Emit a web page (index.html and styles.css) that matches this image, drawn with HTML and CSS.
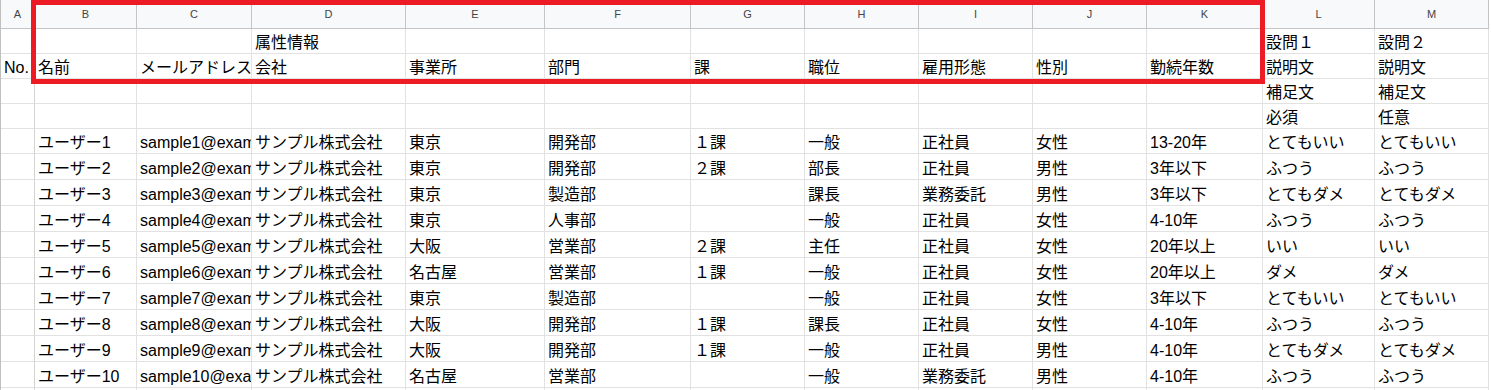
FILE: index.html
```html
<!DOCTYPE html>
<html lang="ja">
<head>
<meta charset="utf-8">
<title>Sheet</title>
<link rel="stylesheet" href="styles.css">
</head>
<body>
<div class="wrap">
  <div class="sheet">
    <div class="h">A</div><div class="h">B</div><div class="h">C</div><div class="h">D</div><div class="h">E</div><div class="h">F</div><div class="h">G</div><div class="h">H</div><div class="h">I</div><div class="h">J</div><div class="h">K</div><div class="h">L</div><div class="h">M</div>

    <div class="c"></div><div class="c"></div><div class="c"></div><div class="c">属性情報</div><div class="c"></div><div class="c"></div><div class="c"></div><div class="c"></div><div class="c"></div><div class="c"></div><div class="c"></div><div class="c">設問１</div><div class="c">設問２</div>

    <div class="c">No.</div><div class="c">名前</div><div class="c">メールアドレス</div><div class="c">会社</div><div class="c">事業所</div><div class="c">部門</div><div class="c">課</div><div class="c">職位</div><div class="c">雇用形態</div><div class="c">性別</div><div class="c">勤続年数</div><div class="c">説明文</div><div class="c">説明文</div>

    <div class="c"></div><div class="c"></div><div class="c"></div><div class="c"></div><div class="c"></div><div class="c"></div><div class="c"></div><div class="c"></div><div class="c"></div><div class="c"></div><div class="c"></div><div class="c">補足文</div><div class="c">補足文</div>

    <div class="c"></div><div class="c"></div><div class="c"></div><div class="c"></div><div class="c"></div><div class="c"></div><div class="c"></div><div class="c"></div><div class="c"></div><div class="c"></div><div class="c"></div><div class="c">必須</div><div class="c">任意</div>

    <div class="c"></div><div class="c">ユーザー1</div><div class="c">sample1@example.com</div><div class="c">サンプル株式会社</div><div class="c">東京</div><div class="c">開発部</div><div class="c">１課</div><div class="c">一般</div><div class="c">正社員</div><div class="c">女性</div><div class="c">13-20年</div><div class="c">とてもいい</div><div class="c">とてもいい</div>

    <div class="c"></div><div class="c">ユーザー2</div><div class="c">sample2@example.com</div><div class="c">サンプル株式会社</div><div class="c">東京</div><div class="c">開発部</div><div class="c">２課</div><div class="c">部長</div><div class="c">正社員</div><div class="c">男性</div><div class="c">3年以下</div><div class="c">ふつう</div><div class="c">ふつう</div>

    <div class="c"></div><div class="c">ユーザー3</div><div class="c">sample3@example.com</div><div class="c">サンプル株式会社</div><div class="c">東京</div><div class="c">製造部</div><div class="c"></div><div class="c">課長</div><div class="c">業務委託</div><div class="c">男性</div><div class="c">3年以下</div><div class="c">とてもダメ</div><div class="c">とてもダメ</div>

    <div class="c"></div><div class="c">ユーザー4</div><div class="c">sample4@example.com</div><div class="c">サンプル株式会社</div><div class="c">東京</div><div class="c">人事部</div><div class="c"></div><div class="c">一般</div><div class="c">正社員</div><div class="c">女性</div><div class="c">4-10年</div><div class="c">ふつう</div><div class="c">ふつう</div>

    <div class="c"></div><div class="c">ユーザー5</div><div class="c">sample5@example.com</div><div class="c">サンプル株式会社</div><div class="c">大阪</div><div class="c">営業部</div><div class="c">２課</div><div class="c">主任</div><div class="c">正社員</div><div class="c">女性</div><div class="c">20年以上</div><div class="c">いい</div><div class="c">いい</div>

    <div class="c"></div><div class="c">ユーザー6</div><div class="c">sample6@example.com</div><div class="c">サンプル株式会社</div><div class="c">名古屋</div><div class="c">営業部</div><div class="c">１課</div><div class="c">一般</div><div class="c">正社員</div><div class="c">女性</div><div class="c">20年以上</div><div class="c">ダメ</div><div class="c">ダメ</div>

    <div class="c"></div><div class="c">ユーザー7</div><div class="c">sample7@example.com</div><div class="c">サンプル株式会社</div><div class="c">東京</div><div class="c">製造部</div><div class="c"></div><div class="c">一般</div><div class="c">正社員</div><div class="c">女性</div><div class="c">3年以下</div><div class="c">とてもいい</div><div class="c">とてもいい</div>

    <div class="c"></div><div class="c">ユーザー8</div><div class="c">sample8@example.com</div><div class="c">サンプル株式会社</div><div class="c">大阪</div><div class="c">開発部</div><div class="c">１課</div><div class="c">課長</div><div class="c">正社員</div><div class="c">女性</div><div class="c">4-10年</div><div class="c">ふつう</div><div class="c">ふつう</div>

    <div class="c"></div><div class="c">ユーザー9</div><div class="c">sample9@example.com</div><div class="c">サンプル株式会社</div><div class="c">大阪</div><div class="c">開発部</div><div class="c">１課</div><div class="c">一般</div><div class="c">正社員</div><div class="c">男性</div><div class="c">4-10年</div><div class="c">とてもダメ</div><div class="c">とてもダメ</div>

    <div class="c"></div><div class="c">ユーザー10</div><div class="c">sample10@example.com</div><div class="c">サンプル株式会社</div><div class="c">名古屋</div><div class="c">営業部</div><div class="c"></div><div class="c">一般</div><div class="c">業務委託</div><div class="c">男性</div><div class="c">4-10年</div><div class="c">ふつう</div><div class="c">ふつう</div>

    <div class="c"></div><div class="c"></div><div class="c"></div><div class="c"></div><div class="c"></div><div class="c"></div><div class="c"></div><div class="c"></div><div class="c"></div><div class="c"></div><div class="c"></div><div class="c"></div><div class="c"></div>
  </div>
  <div class="highlight"></div>
</div>
</body>
</html>
```

FILE: styles.css
```css
html, body {
  margin: 0;
  padding: 0;
  background: #ffffff;
}

body {
  font-family: "Liberation Sans", "Noto Sans CJK JP", sans-serif;
  font-size: 16px;
  color: #000000;
  overflow: hidden;
}

.wrap {
  position: relative;
  width: 1491px;
  height: 390px;
  overflow: hidden;
}

.sheet {
  display: grid;
  grid-template-columns: 34px 102px 115px 154px 139px 146px 114px 114px 114px 114px 116px 112px 114px;
  grid-template-rows: 29px 25px 25px 25px 25px 25px repeat(10, 26px);
  border-left: 1px solid #c0c0c0;
  width: max-content;
}

.h {
  box-sizing: border-box;
  background: #f8f9fa;
  border-right: 1px solid #c4c4c4;
  border-bottom: 1px solid #c4c4c4;
  color: #444444;
  font-family: "Liberation Sans", sans-serif;
  font-size: 11px;
  line-height: 28px;
  text-align: center;
}

.c {
  box-sizing: border-box;
  border-right: 1px solid #e2e2e3;
  border-bottom: 1px solid #e2e2e3;
  display: flex;
  align-items: flex-end;
  padding: 0 3px;
  line-height: 20px;
  white-space: nowrap;
  overflow: hidden;
}

.sheet > .c:nth-child(13n+1) {
  border-right-color: #d4d4d4;
}

.highlight {
  position: absolute;
  left: 31px;
  top: 0;
  width: 1234px;
  height: 84px;
  box-sizing: border-box;
  border: 5px solid #ed1c24;
  pointer-events: none;
}
```
